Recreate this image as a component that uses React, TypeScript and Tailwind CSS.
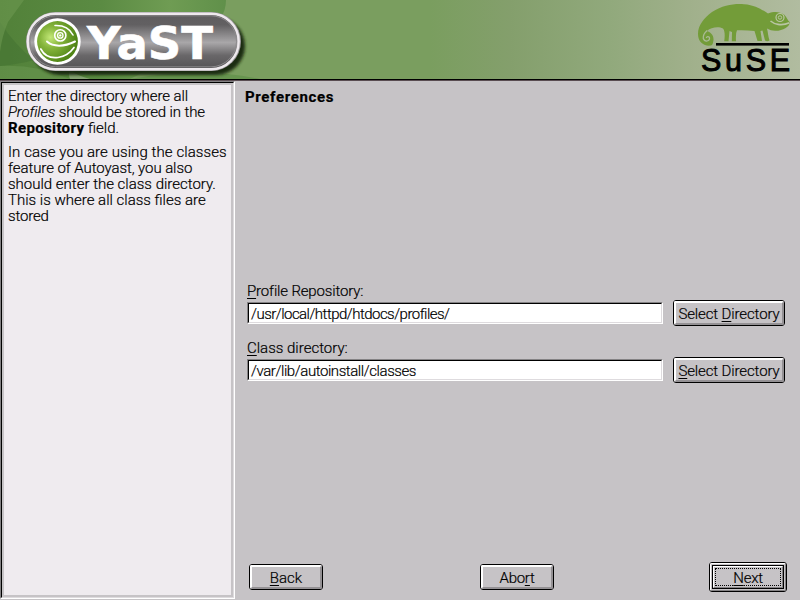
import type { ReactNode } from "react";

function YastBadge() {
  return (
    <svg className="absolute left-0 top-0" width="260" height="79" viewBox="0 0 260 79">
      <defs>
        <linearGradient id="leaf" x1="0" y1="0" x2="1" y2="0">
          <stop offset="0" stopColor="#528139" />
          <stop offset=".45" stopColor="#5b8b43" />
          <stop offset=".75" stopColor="#6f9c53" />
          <stop offset="1" stopColor="#60904a" />
        </linearGradient>
        <linearGradient id="metal" x1="0" y1="0" x2="0" y2="1">
          <stop offset="0" stopColor="#5e5c5e" />
          <stop offset=".2" stopColor="#626062" />
          <stop offset=".52" stopColor="#a9a7a9" />
          <stop offset=".75" stopColor="#696769" />
          <stop offset="1" stopColor="#545254" />
        </linearGradient>
        <radialGradient id="ball" cx=".33" cy=".4" r=".65">
          <stop offset="0" stopColor="#c3e878" />
          <stop offset=".4" stopColor="#86b53c" />
          <stop offset="1" stopColor="#4f8415" />
        </radialGradient>
        <filter id="soft" x="-10%" y="-20%" width="120%" height="150%">
          <feGaussianBlur stdDeviation="1.4" />
        </filter>
      </defs>
      <path d="M0 0H226Q226 20 204 34Q150 70 130 79H0Z" fill="url(#leaf)" />
      <path d="M130 79Q200 66 260 79Z" fill="#5f9048" opacity=".7" />
      <path d="M0 22Q14 44 34 60Q20 64 0 66Z" fill="#416f30" opacity=".45" />
      <path d="M0 0H24L8 22Q2 36 0 52Z" fill="#6c9850" opacity=".6" />
      <path d="M0 66Q36 64 70 79H0Z" fill="#699650" opacity=".6" />
      <path d="M70 79Q68 74 70 70Q78 76 90 79Z" fill="#87a573" />
      <rect x="31" y="17" width="214" height="58" rx="29" fill="#172811" opacity=".95" filter="url(#soft)" />
      <rect x="26" y="12" width="215" height="59" rx="29.5" fill="#989598" />
      <rect x="27.7" y="13.7" width="211" height="55.5" rx="27.7" fill="url(#metal)" stroke="#eee9ed" strokeWidth="2.4" />
      <rect x="30" y="15.8" width="206.5" height="51" rx="25.5" fill="none" stroke="#8b898b" strokeWidth="1" />
      <circle cx="57.5" cy="41.5" r="23.2" fill="#fff" />
      <circle cx="57.5" cy="41.5" r="20.4" fill="url(#ball)" />
      <g fill="none" stroke="#fff" strokeLinecap="round">
        <circle cx="60.3" cy="35.4" r="5.6" strokeWidth="1.6" />
        <circle cx="60.3" cy="35.4" r="2.7" strokeWidth="1.3" />
        <path d="M55 25.5Q68 25 73 35" strokeWidth="1.6" />
        <path d="M47 41.5C53 47 64 47 75 41.5" strokeWidth="2" />
        <path d="M40.8 49Q46 59 58 57.5Q68 56 74 47.5" strokeWidth="1.7" />
      </g>
      <circle cx="60.3" cy="35.4" r="1.2" fill="#fff" />
      <text x="87" y="58.5" fontFamily="DejaVu Sans, sans-serif" fontWeight="700" fontSize="45" fill="#fff" stroke="#fff" strokeWidth=".6" textLength="126" lengthAdjust="spacingAndGlyphs">YaST</text>
    </svg>
  );
}

function SuseLogo() {
  return (
    <svg className="absolute right-0 top-0" width="110" height="79" viewBox="0 0 110 79">
      <path
        d="M21 45.5C15 46.5 8 43 8 34C8 25 14 18 22 12C33 5 44 3.500 54 4.200C66 5 72 10 78 13.500C85 11 90 12 94 14.500C97 17 97 20 100 22.500C99 27 93 31 85 30.800C82 30.700 80 30 77 28.500C78 32 78 36 79.500 40.500Q77 42 75 40.500L72.500 30.500L70.500 31L72 41H67.500L64.500 31Q55 29.800 47 30.300Q45.500 33 46 41.200H41.800L42 32L39.500 31L38.500 41.200H34.200C35 36 35 31 33 28.500C29 26.500 21 27 17 31C20 32 24 35 23.500 40C23 43.500 22.500 45 21 45.500Z"
        fill="#739c39"
      />
      <path d="M17.200 30.500Q12.800 34 13.300 38.500Q14.300 41.300 17 41Q20.300 40 19.300 37.300Q17.600 35.800 16.200 38" fill="none" stroke="#a9ba94" strokeWidth="1.300" />
      <g fill="none" stroke="#b9c5a3">
        <circle cx="90" cy="17.500" r="4" strokeWidth="1.200" />
        <circle cx="90" cy="17.500" r="1.700" strokeWidth="1" />
        <path d="M80.500 21C84 24 91 26.500 99.500 22.800" strokeWidth="1.600" />
      </g>
      <rect x="26" y="43" width="73" height="2.600" fill="#000" />
      <text x="11" y="71" fontFamily="Liberation Sans, Arial, sans-serif" fontSize="30.5" stroke="#000" strokeWidth="1" textLength="89" lengthAdjust="spacing">SuSE</text>
    </svg>
  );
}

function Header() {
  return (
    <header className="relative h-[81px] shrink-0 overflow-hidden border-b border-[#5a4d52] bg-[linear-gradient(90deg,#7a9e5f_0,#7a9e5f_430px,#849f6c_510px,#91a97c_610px,#a2b18d_700px,#b1bca0_800px)]">
      <YastBadge />
      <SuseLogo />
      <div className="absolute inset-x-0 top-[79px] h-px bg-black" />
    </header>
  );
}

function Line({ className = "", children }: { className?: string; children: ReactNode }) {
  return <div className={"h-4 whitespace-nowrap leading-4 " + className}>{children}</div>;
}

function PushButton({ width, className = "", children }: { width: string; className?: string; children: ReactNode }) {
  return (
    <button className={"h-[26px] rounded-[3px] border border-black bg-[#c6c3c6] " + width + " " + className}>
      <span className="flex h-full items-center justify-center whitespace-nowrap rounded-[2px] border-2 border-b-[#949194] border-l-white border-r-[#949194] border-t-white pt-0.5">
        {children}
      </span>
    </button>
  );
}

type DirectoryFieldProps = { label: ReactNode; value: string; valueClass: string; button: ReactNode };

function DirectoryField({ label, value, valueClass, button }: DirectoryFieldProps) {
  return (
    <div className="flex h-[45px] items-end gap-[10px]">
      <div className="w-[416px] pb-0.5">
        <div className="h-[21px] leading-5">{label}</div>
        <div className="h-[22px] border border-b-white border-l-[#848284] border-r-white border-t-[#848284]">
          <div className={"h-5 border border-b-[#dedbde] border-l-black border-r-[#dedbde] border-t-black bg-white pl-[2px] leading-[21px] " + valueClass}>
            {value}
          </div>
        </div>
      </div>
      <PushButton width="w-[112px]">{button}</PushButton>
    </div>
  );
}

const Key = ({ children }: { children: string }) => (
  <span className="underline decoration-1 underline-offset-2">{children}</span>
);

export default function App() {
  return (
    <div className="flex h-[600px] w-[800px] flex-col overflow-hidden bg-[#c6c3c6] font-['Roboto','Liberation_Sans',sans-serif] text-[15px] font-light text-black">
      <Header />
      <div className="flex h-[519px] [-webkit-text-stroke:0.2px_black]">
        <aside className="h-[518px] w-[235px] border border-b-white border-l-[#848284] border-r-white border-t-[#848284]">
          <div className="h-full border border-b-[#dedbde] border-l-black border-r-[#dedbde] border-t-black">
            <div className="h-full border-2 border-[#c6c3c6] bg-[#efebef] pl-1 pt-[3px]">
              <Line className="tracking-[-0.07px]">Enter the directory where all</Line>
              <Line className="tracking-[-0.12px]"><i>Profiles</i> should be stored in the</Line>
              <Line><b className="font-bold tracking-[0.35px]">Repository</b> field.</Line>
              <Line className="mt-2 tracking-[0.08px]">In case you are using the classes</Line>
              <Line className="tracking-[-0.07px]">feature of Autoyast, you also</Line>
              <Line>should enter the class directory.</Line>
              <Line>This is where all class files are</Line>
              <Line className="tracking-[-0.15px]">stored</Line>
            </div>
          </div>
        </aside>
        <main className="flex flex-1 flex-col pl-[10px]">
          <h1 className="h-[200px] pt-[6px] font-bold leading-5 tracking-[0.65px]">Preferences</h1>
          <section className="flex flex-col gap-3 pl-[2px]">
            <DirectoryField
              label={<span className="tracking-[-0.16px]"><Key>P</Key>rofile Repository:</span>}
              value="/usr/local/httpd/htdocs/profiles/"
              valueClass="tracking-[-0.53px]"
              button={<span className="tracking-[-0.12px]">Select <Key>D</Key>irectory</span>}
            />
            <DirectoryField
              label={<span><Key>C</Key>lass directory:</span>}
              value="/var/lib/autoinstall/classes"
              valueClass="tracking-[-0.43px]"
              button={<span className="tracking-[-0.12px]"><Key>S</Key>elect Directory</span>}
            />
          </section>
          <nav className="mt-auto flex items-center justify-between pb-2 pl-1 pr-[13px]">
            <PushButton width="w-[74px]"><span><Key>B</Key>ack</span></PushButton>
            <PushButton width="w-[74px]" className="ml-0.5"><span className="tracking-[-0.3px]">Abo<Key>r</Key>t</span></PushButton>
            <button className="h-[30px] w-[78px] rounded-[3px] border border-black">
              <span className="block h-full rounded-[2px] border border-b-[#848284] border-l-white border-r-[#848284] border-t-white bg-[#c6c3c6] p-px">
                <span className="block h-full border border-black">
                  <span className="block h-full border border-b-[#848284] border-l-white border-r-[#848284] border-t-white p-px">
                    <span className="flex h-full items-center justify-center border border-dotted border-black pt-0.5">
                      <span className="tracking-[-0.3px]"><Key>N</Key>ext</span>
                    </span>
                  </span>
                </span>
              </span>
            </button>
          </nav>
        </main>
      </div>
    </div>
  );
}
